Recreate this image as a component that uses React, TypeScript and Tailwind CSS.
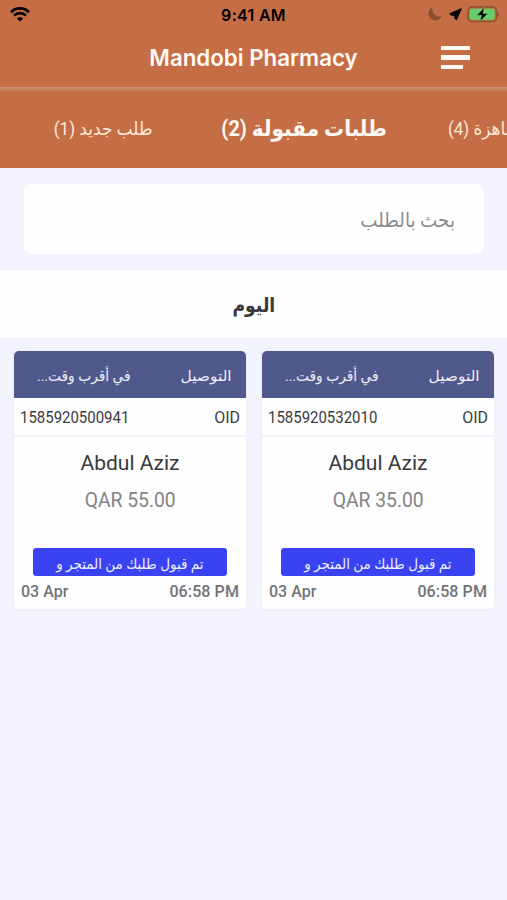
const orders = [
    { id: '1585920500941', customer: 'Abdul Aziz', total: 'QAR 55.00', date: '03 Apr', time: '06:58 PM' },
    { id: '1585920532010', customer: 'Abdul Aziz', total: 'QAR 35.00', date: '03 Apr', time: '06:58 PM' },
];

function StatusBar() {
    return (
        <div className="grid h-7 grid-cols-3 items-center text-black">
            <svg className="ml-[10px] h-[15px] w-5" viewBox="0 0 20 15">
                <path d="M1 5.2C6 .2 14 .2 19 5.2" fill="none" stroke="currentColor" strokeWidth="2.7" />
                <path d="M4 8.6c3.4-3.2 8.6-3.2 12 0" fill="none" stroke="currentColor" strokeWidth="2.7" />
                <path d="M6.9 11.4c1.7-1.7 4.5-1.7 6.2 0L10 14.5z" fill="currentColor" />
            </svg>
            <p className="mt-[2px] text-center font-['Inter',sans-serif] text-[16px] font-semibold tracking-[0.3px] whitespace-nowrap">
                9:41 AM
            </p>
            <div className="flex items-center justify-end pr-[7px]">
                <svg className="h-[14px] w-[14px] text-[#8b4d2e]" viewBox="0 0 14 14">
                    <path d="M4.2.8A6.6 6.6 0 1 0 13.3 9.5C7.500 10.800 3.300 6 4.200.8z" fill="currentColor" stroke="currentColor" strokeWidth=".6" strokeLinejoin="round" />
                </svg>
                <svg className="ml-[7px] h-[13px] w-[13px]" viewBox="0 0 13 13">
                    <path d="M12.300.700.700 5.700l2 1.700 3-.400.100 3 1.600 2z" fill="currentColor" stroke="currentColor" strokeLinejoin="round" />
                </svg>
                <svg className="ml-[5px] h-[17px] w-[33px]" viewBox="0 0 33 17">
                    <rect x="1" y="1" width="28.5" height="14.5" rx="4" fill="none" stroke="#8b4d2e" strokeWidth="1.5" />
                    <rect x="2.7" y="2.7" width="25" height="11" rx="2" fill="#66cf6c" />
                    <path d="M30.8 6c1.7.6 1.7 4 0 4.6z" fill="#8b4d2e" />
                    <path d="M17.5 1.2 9.8 9.2h4.7L13 15.500l7.800-8.100h-4.700z" fill="#000" stroke="#66cf6c" strokeWidth=".6" />
                </svg>
            </div>
        </div>
    );
}

function OrderCard({ order }: { order: (typeof orders)[number] }) {
    return (
        <article className="flex h-[258px] w-[232px] shrink-0 flex-col overflow-hidden rounded-[5px] bg-[#fefefe] shadow-[0_0_5px_rgba(80,80,160,0.05)]">
            <header dir="rtl" className="flex h-[47px] shrink-0 items-center justify-between bg-[#50598b] pr-[14px] pl-[23px] text-[15px] text-[#eceefa]">
                <span className="mt-[3px] origin-right scale-x-[1.03]">التوصيل</span>
                <span className="mt-[3px] origin-left scale-x-[0.92] whitespace-nowrap">في أقرب وقت...</span>
            </header>

            <div className="flex h-[39px] shrink-0 items-center justify-between border-b-2 border-[#f2f2f6] px-[6px] text-base text-[#3c3c3f]">
                <span className="mt-[3px] origin-left scale-x-[0.935]">{order.id}</span>
                <span className="mt-[3px]">OID</span>
            </div>

            <p className="mt-[12px] text-center text-[21px] leading-7 text-[#39393c]">{order.customer}</p>
            <p className="mt-[9px] text-center text-[20px] leading-7 text-[#838386]">
                <span className="inline-block scale-x-[0.965]">{order.total}</span>
            </p>

            <div dir="rtl" className="mx-auto mt-[34px] flex h-7 w-[194px] shrink-0 items-center justify-center rounded-[3px] bg-[#3a43f2] text-[15px] text-[#eceeff]">
                <span className="mt-1 scale-x-90 whitespace-nowrap">تم قبول طلبك من المتجر و</span>
            </div>

            <footer className="mt-[4px] flex justify-between px-[7px] text-base font-medium text-[#737376]">
                <span>{order.date}</span>
                <span className="tracking-[0.1px]">{order.time}</span>
            </footer>
        </article>
    );
}

export default function App() {
    return (
        <div className="min-h-[900px] w-full overflow-hidden bg-[#f4f4ff] font-['Roboto','DejaVu_Sans',sans-serif]">
            <header className="h-[87px] bg-[#c56e45]">
                <StatusBar />
                <div className="grid h-[59px] grid-cols-[1fr_auto_1fr] items-center">
                    <h1 className="col-start-2 font-['Inter',sans-serif] text-[22.3px] font-semibold whitespace-nowrap text-[#fff8f3]">
                        Mandobi Pharmacy
                    </h1>
                    <button className="mr-[37px] flex w-[29px] flex-col gap-[5px] justify-self-end">
                        <span className="h-[4.5px] w-full bg-[#fff8f3]" />
                        <span className="h-[4.5px] w-full bg-[#fff8f3]" />
                        <span className="h-[4.5px] w-[22px] bg-[#fff8f3]" />
                    </button>
                </div>
            </header>

            {/* TABS */}
            <nav className="flex h-[81px] items-center overflow-hidden bg-linear-to-b from-[#c79279] to-[#c56e45] to-[5px] pt-[2px] pl-[53px] whitespace-nowrap text-[#ffe9dc]">
                <button dir="rtl" className="flex w-[99px] shrink-0 text-[18px]">
                    <span className="origin-right scale-x-[0.945]">طلب جديد (1)</span>
                </button>
                <button dir="rtl" className="ml-[70px] flex w-[165px] shrink-0 text-[22px] font-bold text-[#fff8f3]">
                    <span className="origin-right scale-x-[0.91]">طلبات مقبولة (2)</span>
                </button>
                <button dir="rtl" className="ml-[61px] shrink-0 origin-left scale-x-[0.94] text-[18px]">جاهزة (4)</button>
            </nav>

            <main>
                <div className="px-6 py-4">
                    <label dir="rtl" className="flex h-[70px] w-[460px] items-center rounded-lg bg-[#fefefe] px-[29px]">
                        <input
                            placeholder="بحث بالطلب"
                            className="mt-[2px] w-full origin-right scale-x-[0.915] bg-transparent text-[20px] outline-none placeholder:text-[#8c8c8f]"
                        />
                    </label>
                </div>

                <h2 className="flex h-[68px] items-center justify-center bg-[#fefefe] text-[20px] font-bold text-[#39393c]">
                    <span className="mt-[2px] scale-x-[0.86]">اليوم</span>
                </h2>

                <section className="flex gap-4 pt-[13px] pl-[14px]">
                    {orders.map((order) => (
                        <OrderCard key={order.id} order={order} />
                    ))}
                </section>
            </main>
        </div>
    );
}
